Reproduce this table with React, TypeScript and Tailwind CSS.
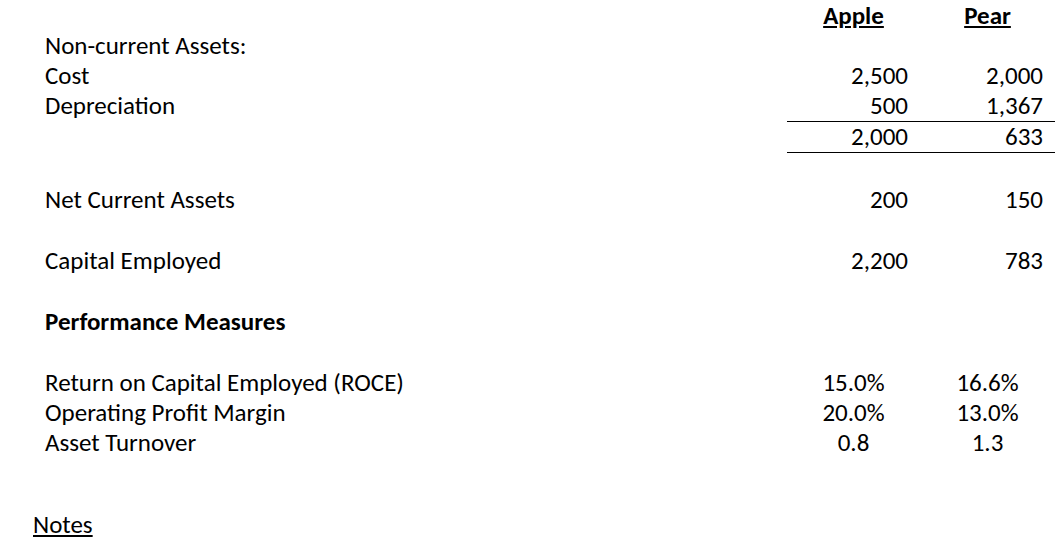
const rows: { label?: string; apple?: string; pear?: string; bold?: boolean; mt: number; center?: boolean; total?: boolean }[] = [
  { label: 'Non-current Assets:', mt: 0 },
  { label: 'Cost', apple: '2,500', pear: '2,000', mt: 0 },
  { label: 'Depreciation', apple: '500', pear: '1,367', mt: 0 },
  { apple: '2,000', pear: '633', mt: 0, total: true },
  { label: 'Net Current Assets', apple: '200', pear: '150', mt: 32 },
  { label: 'Capital Employed', apple: '2,200', pear: '783', mt: 31 },
  { label: 'Performance Measures', bold: true, mt: 31 },
  { label: 'Return on Capital Employed (ROCE)', apple: '15.0%', pear: '16.6%', mt: 31, center: true },
  { label: 'Operating Profit Margin', apple: '20.0%', pear: '13.0%', mt: 0, center: true },
  { label: 'Asset Turnover', apple: '0.8', pear: '1.3', mt: 0, center: true },
];

export default function App() {
  return (
    <div
      className="w-[1062px] h-[545px] bg-white text-black text-[25px] overflow-hidden"
      style={{ fontFamily: 'Carlito, Calibri, Lato, sans-serif' }}
    >
      <div className="flex h-[30px] mt-px leading-[30px]">
        <div className="flex-1" />
        <div className="w-[133px] text-center font-bold underline underline-offset-2">Apple</div>
        <div className="w-[135px] text-center font-bold underline underline-offset-2">Pear</div>
        <div className="w-[7px]" />
      </div>
      {rows.map((r, i) => (
        <div
          key={i}
          className={`flex leading-[30px] ${r.total ? 'h-[32px]' : 'h-[30px]'}`}
          style={{ marginTop: r.mt }}
        >
          <div className={`flex-1 pl-[45px] ${r.bold ? 'font-bold' : ''}`}>{r.label}</div>
          <div
            className={`w-[133px] ${r.center ? 'text-center' : 'text-right pr-[12px]'} ${r.total ? 'border-y border-black' : ''}`}
          >
            {r.apple}
          </div>
          <div
            className={`w-[135px] ${r.center ? 'text-center' : 'text-right pr-[12px]'} ${r.total ? 'border-y border-black' : ''}`}
          >
            {r.pear}
          </div>
          <div className="w-[7px]" />
        </div>
      ))}
      <div className="mt-[52px] pl-[33px] leading-[30px] underline underline-offset-2">Notes</div>
    </div>
  );
}
